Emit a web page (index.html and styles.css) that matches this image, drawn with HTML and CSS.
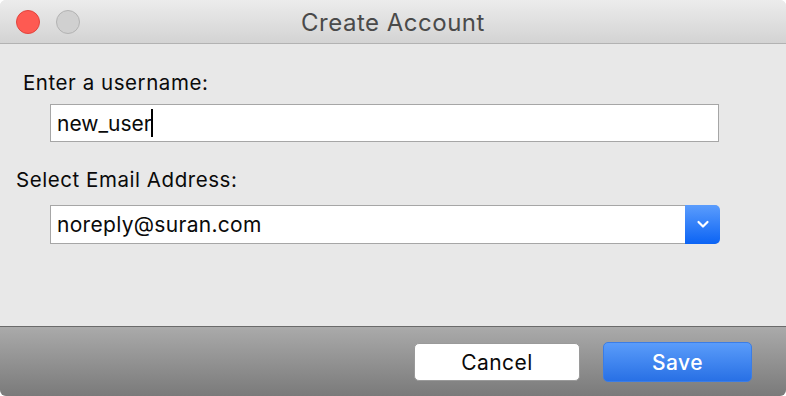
FILE: index.html
```html
<!DOCTYPE html>
<html lang="en">
<head>
  <meta charset="UTF-8">
  <title>Create Account</title>
  <link rel="stylesheet" href="styles.css">
</head>
<body>
  <div class="window">
    <div class="titlebar">
      <div class="lights">
        <span class="light close"></span>
        <span class="light off"></span>
      </div>
      <div class="title">Create Account</div>
    </div>

    <div class="content">
      <label class="label first" for="username">Enter a username:</label>
      <div class="field">
        <span class="value">new_user</span><span class="caret"></span>
      </div>

      <label class="label second">Select Email Address:</label>
      <div class="select">
        <span class="value">noreply@suran.com</span>
        <span class="arrow">
          <svg width="14" height="9" viewBox="0 0 14 9">
            <path d="M2.5 2 L7 6.5 L11.5 2" fill="none" stroke="#fff" stroke-width="2.2" stroke-linecap="round" stroke-linejoin="round"/>
          </svg>
        </span>
      </div>
    </div>

    <div class="footer">
      <button class="btn cancel">Cancel</button>
      <button class="btn save">Save</button>
    </div>
  </div>
</body>
</html>
```

FILE: styles.css
```css
html, body {
  margin: 0;
  padding: 0;
  background: #fff;
}
body {
  font-family: Inter, "Liberation Sans", Arial, sans-serif;
  color: #0a0a0a;
}
.window {
  width: 786px;
  height: 396px;
  display: flex;
  flex-direction: column;
  border-radius: 6px;
  overflow: hidden;
  background: #e8e8e8;
}
.titlebar {
  position: relative;
  height: 43px;
  flex: none;
  background: linear-gradient(#ececec, #d3d3d3);
  border-bottom: 1px solid #b2b2b2;
  display: flex;
  align-items: center;
  justify-content: center;
}
.lights {
  position: absolute;
  left: 16px;
  top: 10px;
  display: flex;
  gap: 16px;
}
.light {
  width: 22px;
  height: 22px;
  border-radius: 50%;
  display: block;
}
.light.close {
  background: #fe5a52;
  border: 1px solid #e2443d;
}
.light.off {
  background: #d0d0d0;
  border: 1px solid #b3b3b3;
}
.title {
  font-size: 24px;
  color: #4a4a4a;
  padding-top: 1px;
  letter-spacing: 0.5px;
}
.content {
  flex: 1;
  padding: 0 67px 0 50px;
}
.label {
  display: block;
  font-size: 20.5px;
  line-height: 24px;
  letter-spacing: 0.55px;
}
.label.first {
  margin: 27px 0 9px -27px;
}
.label.second {
  margin: 26px 0 13px -34px;
}
.field, .select {
  height: 36px;
  border: 1px solid #a6a6a6;
  background: #fff;
  display: flex;
  align-items: center;
  font-size: 21px;
  letter-spacing: 0.3px;
}
.field {
  letter-spacing: 0;
}
.field .value, .select .value {
  padding-left: 6px;
}
.caret {
  width: 2px;
  height: 28px;
  margin-left: -1px;
  background: #000;
}
.select {
  height: 37px;
  border-right: none;
  border-radius: 0 5px 5px 0;
}
.select .value {
  flex: 1;
}
.arrow {
  width: 35px;
  height: 39px;
  margin-right: -1px;
  border-radius: 0 5px 5px 0;
  background: linear-gradient(#5b9dfd, #0b63f4);
  display: flex;
  align-items: center;
  justify-content: center;
}
.footer {
  height: 69px;
  flex: none;
  border-top: 1px solid #6a6a6a;
  background: linear-gradient(#aaaaaa, #7a7a7a);
  display: flex;
  align-items: center;
  justify-content: flex-end;
  gap: 23px;
  padding-right: 34px;
}
.btn {
  font-family: Inter, "Liberation Sans", Arial, sans-serif;
  font-size: 21px;
  letter-spacing: 0.4px;
  height: 38px;
  border-radius: 5px;
  cursor: pointer;
  margin-top: 1px;
}
.cancel {
  width: 166px;
  background: #fff;
  color: #0a0a0a;
  border: 1px solid #9a9a9a;
}
.save {
  width: 149px;
  height: 40px;
  color: #fff;
  font-weight: 500;
  border: 1px solid #3b7de6;
  background: linear-gradient(#5a9cfa, #2870e5);
}
```
